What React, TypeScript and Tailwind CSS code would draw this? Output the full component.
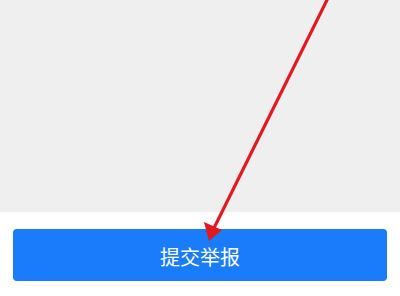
import React from 'react';

const ReportFooter: React.FC = () => {
  return (
    <div className="relative w-[400px] h-[296px] bg-white overflow-hidden" style={{ fontFamily: '"Noto Sans CJK SC", "Noto Sans", sans-serif' }}>
      <div className="h-[212px] bg-[#efefef]" />
      <div className="px-[13px] pt-[17px]">
        <button className="w-full h-[52px] rounded-[4px] bg-[#1a7bfb] text-white text-[20px] pt-[3px] flex items-center justify-center">
          提交举报
        </button>
      </div>

      {/* red annotation arrow */}
      <svg className="absolute inset-0 pointer-events-none" width="400" height="296" viewBox="0 0 400 296">
        <line x1="328" y1="-2" x2="214" y2="228" stroke="#e3191f" strokeWidth="3.2" strokeLinecap="round" />
        <polygon points="209,241 204,222 222,230" fill="#e3191f" />
      </svg>
    </div>
  );
};

export default function App() {
  return <ReportFooter />;
}
